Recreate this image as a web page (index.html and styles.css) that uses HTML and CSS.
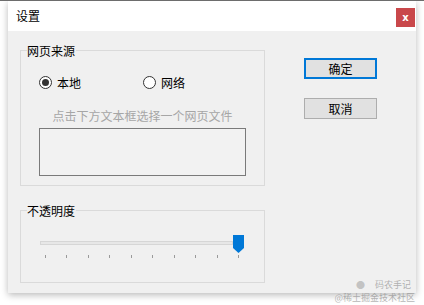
FILE: index.html
```html
<!DOCTYPE html>
<html lang="zh-CN">
<head>
    <meta charset="UTF-8">
    <meta name="viewport" content="width=device-width, initial-scale=1.0">

    <title>设置</title>

    <link rel="stylesheet" href="styles.css">
</head>
<body>
    <div class="window">
        <div class="titlebar">
            <span class="title">设置</span>
            <button class="close">x</button>
        </div>
        <div class="content">
            <div class="groups">
                <fieldset class="group source">
                    <legend>网页来源</legend>
                    <div class="radios">
                        <label class="radio checked"><span class="dot"></span>本地</label>
                        <label class="radio"><span class="dot"></span>网络</label>
                    </div>
                    <p class="hint">点击下方文本框选择一个网页文件</p>
                    <div class="textbox"></div>
                </fieldset>

                <fieldset class="group opacity">
                    <legend>不透明度</legend>
                    <div class="slider">
                        <div class="track"></div>
                        <svg class="thumb" width="11" height="18" viewBox="0 0 11 18">
                            <path d="M0 0 H11 V13 L5.5 18 L0 13 Z" fill="#0078d7"/>
                        </svg>
                    </div>
                    <div class="ticks">
                        <i></i><i></i><i></i><i></i><i></i>
                        <i></i><i></i><i></i><i></i><i></i>
                    </div>
                </fieldset>
            </div>

            <div class="actions">
                <button class="btn default">确定</button>
                <button class="btn">取消</button>
            </div>
        </div>
    </div>

    <!-- watermark over the corner -->
    <div class="watermark">
        <span class="mark-top"><span class="mark-icon">●</span>码农手记</span>
        <span>@稀土掘金技术社区</span>
    </div>
</body>
</html>
```

FILE: styles.css
```css
:root {
    --face: #f0f0f0;
    --line: #dadada;
    --accent: #0078d7;
}
body {
    margin: 0;
    height: 305px;
    border-top: 1px solid #6d6d6d;
    box-sizing: border-box;
    background-color: #fff;
    font-family: "Noto Sans CJK SC", "Noto Sans", sans-serif;
    font-size: 12px;
    color: #000;
    position: relative;
    overflow: hidden;
}

.window {
    margin-left: 8px;
    width: 408px;
    background-color: var(--face);
    box-shadow: 0 2px 7px rgba(0, 0, 0, .28);
}

.titlebar {
    height: 30px;
    background-color: #fff;
    display: flex;
    align-items: flex-start;
    justify-content: space-between;
}
.title {
    margin-left: 8px;
    line-height: 30px;
    font-size: 12px;
}
.close {
    margin-top: 7px;
    margin-right: 1px;
    width: 19px;
    height: 19px;
    padding: 0;
    border: none;
    background-color: #c9484b;
    color: #fff;
    font-family: "DejaVu Sans", sans-serif;
    font-weight: bold;
    font-size: 10px;
    line-height: 17px;
}

.content {
    height: 262px;
    display: flex;
    padding: 11px 0 0 12px;
    box-sizing: border-box;
}

.groups {
    width: 245px;
}
.group {
    margin: 0;
    padding: 0;
    border: 1px solid var(--line);
    min-inline-size: 0;
}
.group legend {
    margin-left: 6px;
    padding: 0 1px 0 0;
    line-height: 17px;
    font-size: 12px;
}
.source {
    padding-bottom: 9px;
}
.opacity {
    margin-top: 16px;
    padding-bottom: 24px;
}

.radios {
    display: flex;
    margin: 15px 0 0 18px;
    line-height: 17px;
}
.radio {
    width: 104px;
    display: flex;
    align-items: center;
    gap: 5px;
}
.dot {
    width: 11px;
    height: 11px;
    border: 1px solid #333;
    border-radius: 50%;
    background-color: #fff;
    display: grid;
    place-items: center;
}
.checked .dot::after {
    content: "";
    width: 7px;
    height: 7px;
    border-radius: 50%;
    background-color: #333;
}

.hint {
    margin: 17px 0 0;
    text-align: center;
    line-height: 16px;
    color: #a6a6a6;
}
.textbox {
    margin: 4px 18px 0;
    height: 46px;
    border: 1px solid #7a7a7a;
    background-color: #f2f2f2;
}

.slider {
    margin: 16px 20px 0 19px;
    display: flex;
    align-items: flex-start;
}
.track {
    flex: 1;
    margin-top: 6px;
    height: 2px;
    border: 1px solid #d6d6d6;
    background-color: #e7e7e7;
}
.thumb {
    display: block;
}
.ticks {
    margin: 2px 25px 0 24px;
    height: 3px;
    display: flex;
    justify-content: space-between;
}
.ticks i {
    width: 1px;
    height: 3px;
    background-color: #9a9a9a;
}

.actions {
    margin-left: 39px;
    padding-top: 16px;
    display: flex;
    flex-direction: column;
    gap: 19px;
}
.btn {
    width: 73px;
    height: 21px;
    padding: 0;
    border: 1px solid #adadad;
    background-color: #e1e1e1;
    font-family: inherit;
    font-size: 12px;
    color: #000;
}
.btn.default {
    border: 2px solid var(--accent);
}

.watermark {
    position: absolute;
    right: 9px;
    bottom: 1px;
    display: flex;
    flex-direction: column;
    align-items: flex-end;
    gap: 1px;
    font-size: 9px;
    line-height: 12px;
    color: rgba(120, 120, 120, .55);
}
.mark-top {
    margin-right: 4px;
    display: flex;
    gap: 10px;
}
.mark-icon {
    color: rgba(150, 150, 150, .5);
}
```
